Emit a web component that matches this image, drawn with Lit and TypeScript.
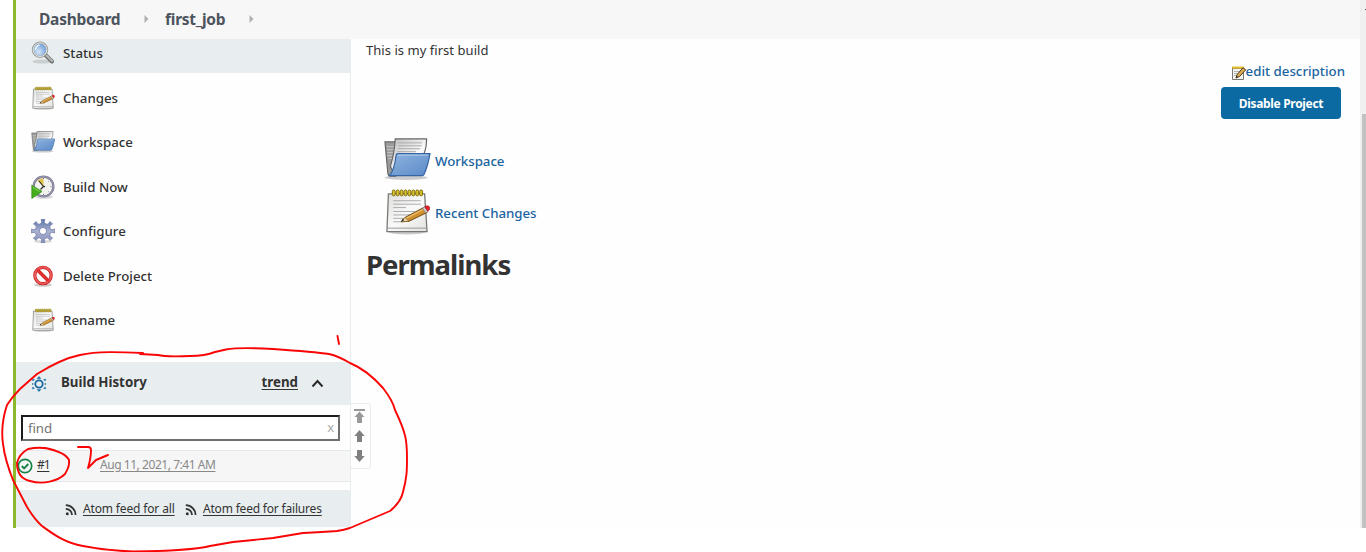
import { LitElement, html, svg, css } from "lit";
import { customElement } from "lit/decorators.js";

const notepad = (size: number) => html`<svg width=${size} height=${size} viewBox="0 0 48 48">
  <defs><linearGradient id="pg" x1="0" y1="0" x2="1" y2="1"><stop offset="0" stop-color="#dcdcda"/><stop offset=".5" stop-color="#fafafa"/><stop offset="1" stop-color="#e2e2e0"/></linearGradient></defs>
  <ellipse cx="24" cy="45" rx="19" ry="2.500" fill="#000" opacity=".2"/>
  <path d="M5 6h37l2.500 38.500h-41z" fill="url(#pg)" stroke="#777873" stroke-width="1.300"/>
  <path d="M4 41h40" stroke="#999" stroke-width="1"/>
  <path d="M10 13h28M10 16.500h28M10 20h13M10 24h22M10 27.500h18M10 31h12M10 34.500h8" stroke="#aaa" stroke-width="1"/>
  ${[9, 13, 17, 21, 25, 29, 33, 37].map((x) => svg`<rect x=${x} y="2" width="2.900" height="6" rx="1.400" fill="#dcc62f" stroke="#7c6a08" stroke-width="1"/>`)}
  <path d="M18 34.500l4-4.500L41 20l3.500 5-18.500 9z" fill="#cf8f2e" stroke="#6d4a18" stroke-width="1"/>
  <path d="M23 31L41 21.700" stroke="#eebf6d" stroke-width="1.300"/>
  <path d="M18 34.500l4-4.500 4 4z" fill="#ecd6a6" stroke="#75511c" stroke-width=".6"/>
  <path d="M18 34.500l3-1.500-1.500-1.600z" fill="#222"/>
  <path d="M40 20.500l2-1.300 3.500 4.800-2.500 1.500z" fill="#ccc" stroke="#777" stroke-width=".6"/>
  <path d="M42 19q4-1.800 5 .6.800 2.500-1.800 4.200z" fill="#e8202a" stroke="#9b1515" stroke-width=".6"/>
</svg>`;

const smallNotepad = html`<svg width="16" height="16" viewBox="0 0 16 16">
  <path d="M1.500 2.500h11v12h-11z" fill="#f3f3f1" stroke="#777873"/>
  <path d="M3 6.500h8M3 8.500h5M3 10.500h4" stroke="#b5b5b2"/>
  <path d="M1 1.500h12v2H1z" fill="#e2bd2e"/><path d="M1.500 3.500h11" stroke="#8d6e0d" stroke-dasharray="1 1"/>
  <path d="M5 13l1.200-3.500L12 2.800l2.700 2L8.500 11.500z" fill="#dfac59" stroke="#4a3714" stroke-width="1"/>
  <path d="M5 13l.700-2 1.200 1z" fill="#222"/>
</svg>`;

const folder = (size: number) => html`<svg width=${size} height=${size} viewBox="0 0 48 48">
  <defs><linearGradient id="fb" x1="0" y1="0" x2="1" y2="1"><stop offset="0" stop-color="#8fb4df"/><stop offset="1" stop-color="#5b8ac8"/></linearGradient>
  <linearGradient id="fp" x1="0" y1="0" x2="1" y2="1"><stop offset="0" stop-color="#bbb"/><stop offset=".6" stop-color="#fafafa"/></linearGradient></defs>
  <ellipse cx="23" cy="42.500" rx="22" ry="2.500" fill="#000" opacity=".2"/>
  <path d="M1.500 6h12l-1 35H7q-2 0-2.500-2.500z" fill="#9c9c9c" stroke="#666" stroke-width="1.200"/>
  <path d="M3 11h9M3.500 14h9M4 17h8M4 20h7M5 23h6" stroke="#c8c8c8" stroke-width="1"/>
  <path d="M12 3h32q0 9-3 16L9 35 7 31q4-13 5-28z" fill="url(#fp)" stroke="#666" stroke-width="1.200"/>
  <path d="M15 7h24M15 10h24M14.500 13h23M14 16h19" stroke="#aaa" stroke-width="1"/>
  <path d="M13 19q.4-1 1.500-1h33q-2 12-6 21-.7 1.500-2 1.500H6q5-5 7-21.500z" fill="url(#fb)" stroke="#3465a4" stroke-width="1.200"/>
  <path d="M14.500 19.500h31" stroke="#b5cfec" stroke-width="1"/>
</svg>`;

const gearPath = (() => {
  const p: string[] = [];
  for (let i = 0; i < 8; i++) {
    const c = (i * Math.PI) / 4;
    [[-0.27, 7.8], [-0.13, 9], [-0.16, 11.8], [0.16, 11.8], [0.13, 9], [0.27, 7.8]].forEach(([d, r]) =>
      p.push(`${(12 + r * Math.sin(c + d)).toFixed(2)} ${(12 - r * Math.cos(c + d)).toFixed(2)}`));
  }
  return `M${p.join("L")}Z M12 8.500a3.500 3.500 0 1 0 .01 0Z`;
})();

const icons: Record<string, unknown> = {
  search: html`<svg width="24" height="24" viewBox="0 0 24 24">
    <defs><radialGradient id="ln" cx=".4" cy=".65"><stop offset="0" stop-color="#d9e8f8"/><stop offset="1" stop-color="#7fa9dd"/></radialGradient></defs>
    <ellipse cx="11" cy="20.500" rx="9.500" ry="2" fill="#000" opacity=".13"/>
    <path d="M14.500 14l6.500 6.500" stroke="#6c6e6b" stroke-width="4" stroke-linecap="round"/>
    <path d="M15.500 14.500l5.500 5.500" stroke="#b9bab8" stroke-width="2" stroke-linecap="round"/>
    <circle cx="9" cy="8.700" r="7.200" fill="url(#ln)" stroke="#9a9c98" stroke-width="2"/>
    <circle cx="9" cy="8.700" r="6.800" fill="none" stroke="#ecedeb" stroke-width=".9"/>
    <path d="M4.500 9q0-4 4-5" stroke="#edf5ff" stroke-width="1.500" fill="none"/></svg>`,
  note: notepad(24),
  folder: folder(24),
  clock: html`<svg width="24" height="24" viewBox="0 0 24 24">
    <ellipse cx="13" cy="22" rx="9" ry="1.800" fill="#000" opacity=".15"/>
    <circle cx="12.500" cy="11.500" r="9.900" fill="#f2f2ee" stroke="#7c7a94" stroke-width="2.300"/>
    <circle cx="12.500" cy="11.500" r="10" fill="none" stroke="#aaa9bd" stroke-width=".7"/>
    <path d="M12.500 11.500L6.500 5.500q2.500-2 6-2z" fill="#e1c24b"/>
    <path d="M12.500 11.500L8 6M12.500 11.500l-3 3M12.500 11l1.500 1" stroke="#272727" stroke-width="1.100"/>
    <path d="M12.500 3v1M19.500 11.500h1M12.500 19v1M18 6l-.5.500M18 17l-.5-.5" stroke="#777" stroke-width="1"/>
    <path d="M.800 10.200L11 16.500.800 23.500z" fill="#43ad1b" stroke="#318711" stroke-width=".7"/>
    <path d="M1.700 12.200L8.500 16.500" stroke="#8dda62" stroke-width=".9"/></svg>`,
  gear: html`<svg width="24" height="24" viewBox="0 0 24 24">
    <defs><linearGradient id="gr" x1="0" y1="0" x2="0" y2="1"><stop offset="0" stop-color="#5875a8"/><stop offset=".5" stop-color="#a9b0d0"/><stop offset="1" stop-color="#8992b9"/></linearGradient></defs>
    <ellipse cx="12" cy="22.500" rx="9" ry="1.500" fill="#000" opacity=".15"/>
    <path d=${gearPath} fill="url(#gr)" fill-rule="evenodd" stroke="#727eaa" stroke-width=".8" stroke-linejoin="round"/></svg>`,
  stop: html`<svg width="24" height="24" viewBox="0 0 24 24">
    <ellipse cx="12" cy="21" rx="9" ry="1.800" fill="#000" opacity=".2"/>
    <circle cx="12" cy="11.500" r="8.200" fill="none" stroke="#c41414" stroke-width="3.200"/>
    <path d="M6 5.500l12 12" stroke="#cb1717" stroke-width="3.400"/>
    <circle cx="12" cy="11.500" r="8.200" fill="none" stroke="#ea5a5a" stroke-width="2"/>
    <path d="M6 5.500l12 12" stroke="#e43333" stroke-width="2"/></svg>`,
};

const rss = html`<svg class="rss" width="12" height="12" viewBox="0 0 12 12"><circle cx="2.300" cy="9.700" r="1.500" fill="#333"/><path d="M.800 4.800a6.200 6.200 0 0 1 6.200 6.200M.800 1.200a9.800 9.800 0 0 1 9.800 9.800" fill="none" stroke="#333" stroke-width="1.800"/></svg>`;

const crumb = html`<svg class="crumb" width="5" height="8" viewBox="0 0 5 8"><path d="M.5 0L4.500 4L.5 8z" fill="#b0b0b0"/></svg>`;

const menu = [
  ["Status", "search", "st"],
  ["Changes", "note", "ch"],
  ["Workspace", "folder", "ws"],
  ["Build Now", "clock", "bn"],
  ["Configure", "gear", "cf"],
  ["Delete Project", "stop", "dp"],
  ["Rename", "note", "rn"],
];

@customElement("app-root")
export class AppRoot extends LitElement {
  static styles = css`
    :host { display: block; position: relative; width: 1366px; height: 552px; overflow: hidden; background: #fff;
      font-family: "Noto Sans", "Open Sans", sans-serif; font-size: 13.300px; color: #333; white-space: nowrap; }
    * { box-sizing: border-box; }
    svg { display: block; flex: none; }
    .frame { display: flex; height: 528px; padding-left: 13px; }
    .page { flex: 1; border-left: 3px solid #8cb92c; background: #fefefe; display: flex; flex-direction: column; }
    .top { height: 39px; flex: none; background: #f7f7f7; display: flex; align-items: center; padding: 0 0 1px 23px;
      font-size: 15.500px; font-weight: 700; color: #4d545d; }
    .crumb { margin: 0 16px 0 24px; }
    .dash { width: 81px; letter-spacing: -0.250px; }
    .job { width: 60px; letter-spacing: -0.250px; }
    .body { flex: 1; display: flex; }
    .side { width: 335px; border-right: 1px solid #e8edef; display: flex; flex-direction: column; }
    .menu { height: 323px; flex: none; }
    .item { height: 44.500px; display: flex; align-items: center; padding: 0 0 0 15px; gap: 8px; font-weight: 500; }
    .item.st { height: 34px; background: #e8eef0; padding-bottom: 6px; margin-bottom: 2.500px; }
    .hist { height: 43px; background: #e8eef0; display: flex; align-items: center; padding: 0 26px 3px 15px; font-weight: 700; color: #333; }
    .sun { margin: 3px 14px 0 0; }
    .title { flex: 1; }
    .u { text-decoration: underline; text-underline-offset: 2px; }
    .chev { margin: 3px 0 0 13px; }
    .find { margin: 10px 10px 9px 5px; height: 26px; border: 2px solid; border-color: #1c1c1c #707070 #707070 #1c1c1c;
      display: flex; align-items: center; justify-content: space-between; padding: 0 4px 0 5px; color: #757575; background: #fff; }
    .find span { letter-spacing: -0.100px; }
    .x { color: #aaa; font-size: 13px; padding-bottom: 2px; }
    .build { height: 32px; border-top: 1px solid #e5e9eb; border-bottom: 1px solid #e5e9eb; background: #f6f6f6;
      display: flex; align-items: center; padding: 0 0 3px 1px; font-size: 12px; }
    .ok { margin: 3px 4px 0 0; }
    .num { width: 12px; margin-right: 51px; letter-spacing: -1.100px; }
    .date { color: #888; letter-spacing: -0.450px; }
    .feeds { height: 37px; margin-top: 8px; background: #e8eef0; display: flex; align-items: center; padding: 0 0 0 49px; font-size: 12px; letter-spacing: -0.150px; }
    .rss { margin: 3px 6px 0 0; }
    .all { width: 92px; margin-right: 10px; }
    .fail { letter-spacing: -0.190px; }
    .main { flex: 1; display: flex; padding: 0 15px; justify-content: space-between; }
    .desc { padding-top: 2px; font-size: 13px; letter-spacing: 0.040px; line-height: 18px; }
    .links { padding: 76px 0 0 17px; display: flex; flex-direction: column; gap: 4px; font-weight: 500; color: #1a64a0; }
    .link { display: flex; align-items: center; height: 48px; gap: 4px; }
    .link svg { width: 48px; height: 47px; }
    .link span { padding-top: 4px; letter-spacing: -0.050px; }
    h1 { margin: 12px 0 0; font-size: 27.500px; line-height: 36px; font-weight: 700; color: #333; letter-spacing: -1.000px; }
    .actions { display: flex; flex-direction: column; align-items: flex-end; padding-top: 23px; }
    .edit { display: flex; align-items: center; height: 17px; font-weight: 500; color: #1a64a0; }
    .edit svg { margin: 4px -1px 0 0; }
    .btn { margin: 8px 4px 0 0; width: 120px; height: 32px; border: 0; border-radius: 4px; background: #0b6aa2; color: #fff;
      font: 700 12px "Noto Sans", sans-serif; letter-spacing: -0.320px; padding: 0; }
    .bar { width: 6px; background: #f0f0f0; padding: 114px 0 0 2px; }
    .thumb { height: 414px; background: #c1c1c1; }
    .mark { position: absolute; left: 1365px; top: 9px; width: 1px; height: 1px; background: #444; }
    .pager { position: absolute; left: 350px; top: 403px; width: 21px; height: 66px; border: 1px solid #e8edef; border-radius: 3px; background: #fefefe; padding: 5px 0 0 3px; }
    .ink { position: absolute; left: 0; top: 0; }
  `;

  render() {
    return html`
      <div class="frame">
        <div class="page">
          <div class="top"><span class="dash">Dashboard</span>${crumb}<span class="job">first_job</span>${crumb}</div>
          <div class="body">
            <div class="side">
              <div class="menu">${menu.map(([t, i, c]) => html`<div class="item ${c}">${icons[i]}<span>${t}</span></div>`)}</div>
              <div class="hist">
                <svg class="sun" width="16" height="16" viewBox="0 0 16 16" fill="none" stroke="#1568a0"><circle cx="8" cy="8" r="3.700" stroke-width="1.800"/>
                  <path d="M8 .5L9.800 2.500H6.200zM8 15.500L9.800 13.500H6.200zM1.300 3.200l2.100.3-1.500 1.600zM14.700 3.200l-2.100.3 1.500 1.600zM1.300 12.800l2.100-.3-1.500-1.600zM14.700 12.800l-2.100-.3 1.500-1.600z" fill="#1568a0" stroke="#1568a0" stroke-width=".5"/>
                  <path d="M1.800 7v2M14.200 7v2" stroke-width="1"/></svg>
                <span class="title">Build History</span><span class="u trend">trend</span>
                <svg class="chev" width="13" height="9" viewBox="0 0 13 9"><path d="M1.500 7.500l5-5.500 5 5.500" fill="none" stroke="#2b2b2b" stroke-width="2"/></svg>
              </div>
              <div class="find"><span>find</span><span class="x">x</span></div>
              <div class="build">
                <svg class="ok" width="16" height="16" viewBox="0 0 16 16" fill="none" stroke="#138347"><circle cx="8" cy="8" r="6.700" stroke-width="1.700"/><path d="M4.800 8l2.300 2.400L11.300 6" stroke-width="1.900"/></svg>
                <span class="u num">#1</span><span class="u date">Aug 11, 2021, 7:41 AM</span>
              </div>
              <div class="feeds">${rss}<span class="u all">Atom feed for all</span>${rss}<span class="u fail">Atom feed for failures</span></div>
            </div>
            <div class="main">
              <div>
                <div class="desc">This is my first build</div>
                <div class="links">
                  <div class="link">${folder(47)}<span>Workspace</span></div>
                  <div class="link">${notepad(47)}<span>Recent Changes</span></div>
                </div>
                <h1>Permalinks</h1>
              </div>
              <div class="actions">
                <div class="edit">${smallNotepad}<span>edit description</span></div>
                <button class="btn">Disable Project</button>
              </div>
            </div>
          </div>
        </div>
        <div class="bar"><div class="thumb"></div></div>
      </div>
      <div class="mark"></div>
      <div class="pager"><svg width="13" height="54" viewBox="0 0 13 54"><path d="M0 0h11v2H0zM5.500 2.500l5 5.500H8v6H3V8H.5z" fill="#999"/><path d="M5.500 21l5.200 6H8v6H3v-6H.3zM5.500 53l5.200-6H8v-6H3v6H.3z" fill="#808080"/></svg></div>
      <svg class="ink" width="1366" height="552" viewBox="0 0 1366 552" fill="none" stroke="#fa0505" stroke-width="1.900" stroke-linejoin="round" stroke-linecap="round">
        <path d="M143 353C120 352 98 351 80 355C65 358 50 366 37 374Q29 381 20 389Q12 397 7 405C3 417 1 430 3 444Q5 460 13 480L27 507Q35 520 42 526C53 534 65 543 83 546C103 550 115 551 133 551.500Q190 551 210 546L233 542L273 538L303 533Q323 532 337 531Q344 530 350 528L390 511Q401 502 403 492C407 477 407 470 407 458C407 440 406 433 395 410Q393 401 383 388Q367 370 350 363Q338 356 329 354Q315 352 273 349Q240 347 226 349.500L215 352Q205 356 190 356Q165 357 158 355L140 354"/>
        <path d="M53 450Q42 446 28 449Q19 454 17 463C17 472 21 479 30 481C43 485 58 481 65 474Q70 466 69 460Q65 452 45 448"/>
        <path d="M78 447H88Q91 447 91 450Q91 458 88 468L96 460L108 455M337.500 336L339 344"/>
      </svg>`;
  }
}
